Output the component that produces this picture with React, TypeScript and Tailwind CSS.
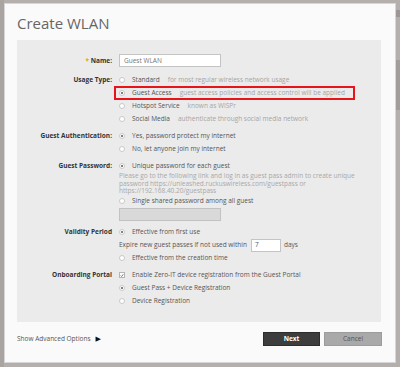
import type { ReactNode } from 'react';

const font = { fontFamily: '"Open Sans", "DejaVu Sans", sans-serif' };

function Radio({ on }: { on?: boolean }) {
  return (
    <span className="w-[6px] h-[6px] rounded-full border border-[#c9c9c9] bg-white flex items-center justify-center shrink-0">
      {on && <span className="w-[2px] h-[2px] rounded-full bg-[#555]" />}
    </span>
  );
}

function Check() {
  return (
    <span className="w-[6px] h-[6px] border border-[#b5b5b5] bg-white flex items-center justify-center shrink-0">
      <svg viewBox="0 0 6 6" className="w-[5px] h-[5px]">
        <path d="M1 3 L2.5 4.5 L5 1" fill="none" stroke="#444" strokeWidth="1" />
      </svg>
    </span>
  );
}

function Row({ label, children, className = '' }: { label?: ReactNode; children: ReactNode; className?: string }) {
  return (
    <div className={`flex h-[13px] items-center ${className}`}>
      <div className="w-[95px] shrink-0 text-right font-bold text-[#333]">{label}</div>
      <div className="pl-[7px] flex items-center flex-1">{children}</div>
    </div>
  );
}

function Option({ on, title, note }: { on?: boolean; title: string; note?: string }) {
  return (
    <>
      <Radio on={on} />
      <span className="ml-[7px] text-[#555] whitespace-nowrap">{title}</span>
      {note && <span className="ml-[8px] text-[#a5a5a5] whitespace-nowrap">{note}</span>}
    </>
  );
}

export default function App() {
  return (
    <div className="w-[400px] h-[367px] bg-[#b4afad] flex overflow-hidden" style={font}>
      <div className="w-[4px] shrink-0 bg-[#a9a4a2]" />
      <div className="mt-[3px] w-[392px] h-[360px] bg-[#fafafa] border border-[#d6d6d6] shrink-0 flex flex-col">
        <div className="pl-[12px] pt-[9px] h-[36px] text-[15px] leading-[20px] text-[#666]">Create WLAN</div>
        <div className="ml-[12px] w-[364px] h-[282px] bg-[#ebebeb] pt-[14px] text-[6.5px]">
          <Row
            label={
              <>
                <span className="text-[#f0a020]">* </span>Name:
              </>
            }
          >
            <div className="w-[102px] h-[13px] bg-white border border-[#c4c4c4] flex items-center pl-[4px] text-[#777]">
              Guest WLAN
            </div>
          </Row>
          <Row label="Usage Type:" className="mt-[6px]">
            <Option title="Standard" note="for most regular wireless network usage" />
          </Row>
          <Row>
            <div className="-ml-[5px] w-[241px] h-[14px] border-2 border-[#e8141a] flex items-center pl-[3px]">
              <Option on title="Guest Access" note="guest access policies and access control will be applied" />
            </div>
          </Row>
          <Row>
            <Option title="Hotspot Service" note="known as WISPr" />
          </Row>
          <Row>
            <Option title="Social Media" note="authenticate through social media network" />
          </Row>
          <Row label="Guest Authentication:" className="mt-[4px]">
            <Option on title="Yes, password protect my internet" />
          </Row>
          <Row>
            <Option title="No, let anyone join my internet" />
          </Row>
          <Row label="Guest Password:" className="mt-[4px]">
            <Option on title="Unique password for each guest" />
          </Row>
          <div className="flex">
            <div className="w-[95px] shrink-0" />
            <div className="pl-[7px] w-[250px] leading-[7.5px] text-[#a8a8a8]">
              Please go to the following link and log in as guest pass admin to create unique password
              https://unleashed.ruckuswireless.com/guestpass or https://192.168.40.20/guestpass
            </div>
          </div>
          <Row>
            <Option title="Single shared password among all guest" />
          </Row>
          <Row>
            <div className="w-[102px] h-[13px] bg-[#d9d9d9] border border-[#c2c2c2]" />
          </Row>
          <Row label="Validity Period" className="mt-[5px]">
            <Option on title="Effective from first use" />
          </Row>
          <Row>
            <span className="text-[#555] whitespace-nowrap">Expire new guest passes if not used within</span>
            <div className="ml-[4px] w-[30px] h-[13px] bg-white border border-[#c4c4c4] flex items-center pl-[3px] text-[#555]">
              7
            </div>
            <span className="ml-[3px] text-[#555]">days</span>
          </Row>
          <Row>
            <Option title="Effective from the creation time" />
          </Row>
          <Row label="Onboarding Portal" className="mt-[4px]">
            <Check />
            <span className="ml-[7px] text-[#555] whitespace-nowrap">
              Enable Zero-IT device registration from the Guest Portal
            </span>
          </Row>
          <Row>
            <Option on title="Guest Pass + Device Registration" />
          </Row>
          <Row>
            <Option title="Device Registration" />
          </Row>
        </div>
        <div className="flex items-center pl-[12px] pr-[13px] mt-[10px] text-[6.5px]">
          <span className="text-[#555]">Show Advanced Options</span>
          <span className="ml-[5px] text-[#111] text-[7px]">▶</span>
          <div className="flex-1" />
          <button className="w-[57px] h-[14px] bg-[#3d3d3d] border border-[#2c2c2c] text-white font-bold">Next</button>
          <button className="ml-[4px] w-[58px] h-[14px] bg-[#a9a9a9] border border-[#9c9c9c] text-[#555]">Cancel</button>
        </div>
      </div>
      <div className="flex-1 flex flex-col">
        <div className="h-[10px]" />
        <div className="h-[7px] bg-[#9c9796]" />
        <div className="h-[43px]" />
        <div className="h-[50px] bg-[#a29d9b]" />
      </div>
    </div>
  );
}
